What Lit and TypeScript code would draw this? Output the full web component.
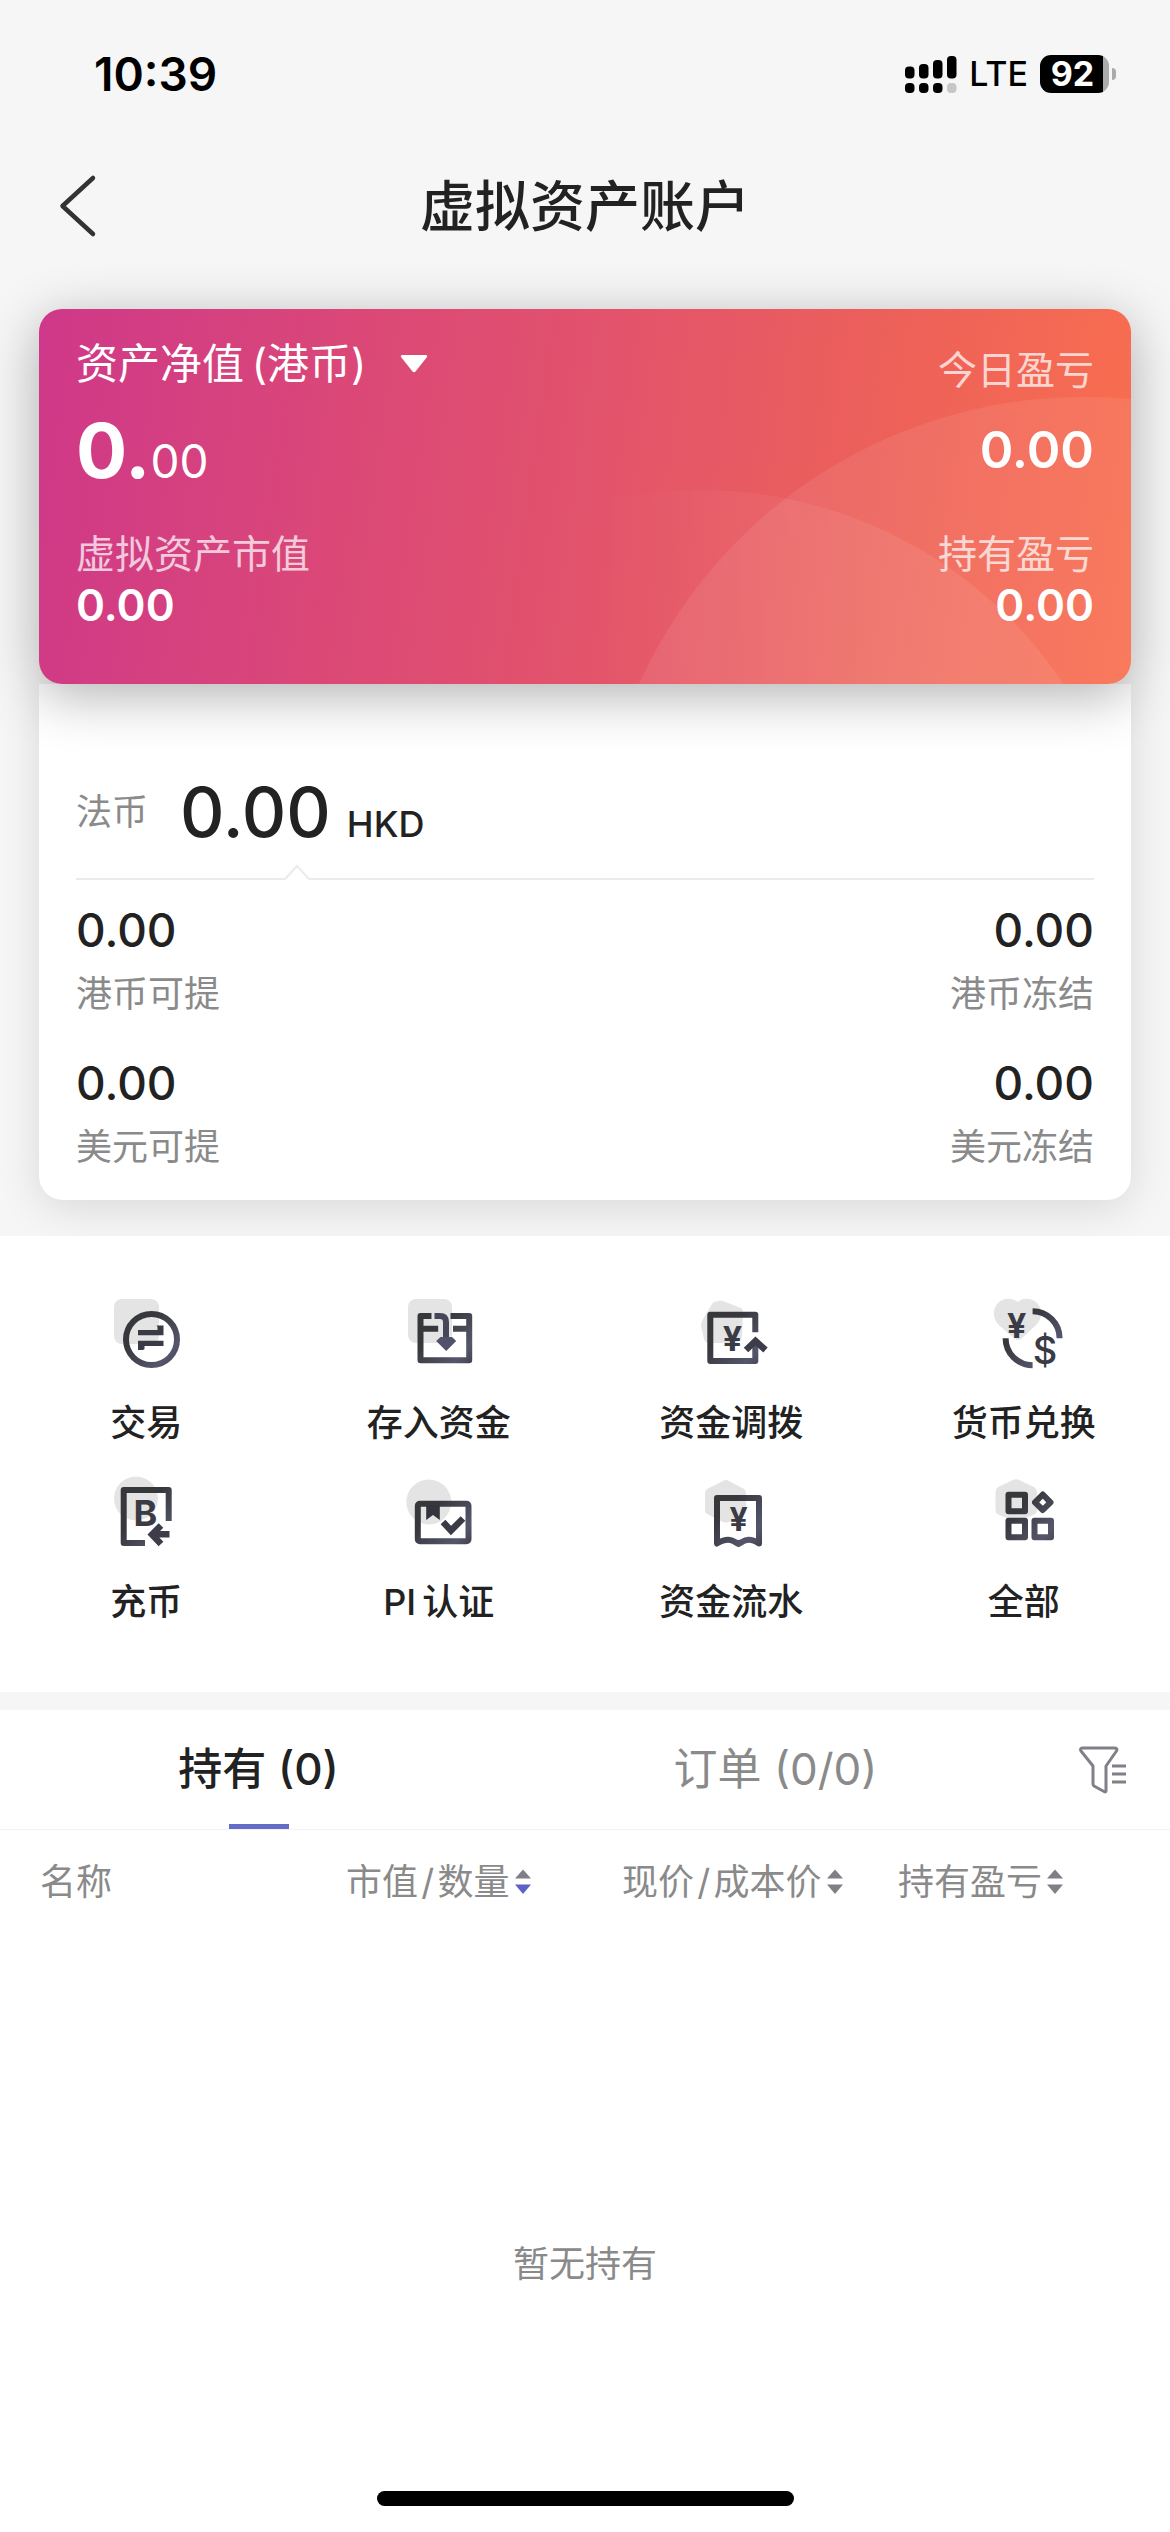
import { LitElement, html, svg, css } from "lit";
import { customElement, property, state } from "lit/decorators.js";
import { classMap } from "lit/directives/class-map.js";

const INK = "url(#ink)";

const icons = {
  trade: svg`
    <rect x="4" y="3" width="45" height="45" rx="8" fill="#e4e4e4" />
    <circle cx="41.5" cy="43.5" r="25.5" fill="none" stroke=${INK} stroke-width="6" />
    <path fill="#3a3b44" d="M28 39.2V34H47.5V31L46.5 29.5H53.5V39.2Z" />
    <path fill="#3a3b44" d="M53.5 44.8V50H34.5V53L33 54H28V44.8Z" />`,
  deposit: svg`
    <rect x="5" y="3" width="44" height="44" rx="8" fill="#e4e4e4" />
    <path fill="none" stroke=${INK} stroke-width="6" stroke-linejoin="round"
      d="M28.5 20H17.5V64.3H66.2V20H47.5M17.5 32.7H35.2M50 32.7H66.2" />
    <path fill="none" stroke="#45465a" stroke-width="6" d="M31.5 20H37Q43 20 43 26V44" />
    <path fill="#50526a" d="M33.2 45L37.5 41H49L53.2 45L43.2 55Z" />`,
  transfer: svg`
    <path fill="#e4e4e4" d="M23 5Q25 4 28 5L46 12Q48 13 48 16L47 40Q45 47 40 47H14Q10 47 9 43L6 30Q6 27 7 25L17 8Q18 6 23 5Z" />
    <path fill="none" stroke=${INK} stroke-width="6" stroke-linejoin="round"
      d="M60.3 36.3V18.7H15.3V65H60.3V48" />
    <path fill="none" stroke="#3c3d49" stroke-width="6.5" d="M51 54L60.5 45L70.5 54" />
    <text class="glyph" x="37.5" y="54.7" font-size="34">¥</text>`,
  exchange: svg`
    <path fill="#e4e4e4" d="M30 6C35 1 45 2 50 8C56 16 53 25 46 31L33 43Q30 45 27 43L13 31C4 24 4 13 10 7C16 1 25 2 30 6Z" />
    <path fill="none" stroke=${INK} stroke-width="6" d="M44.6 15.2A27 27 0 0 1 71.6 42.2M17.6 42.2A27 27 0 0 0 44.6 69.2" />
    <text class="glyph" x="28.7" y="42" font-size="34">¥</text>
    <text class="glyph thin" x="57" y="68" font-size="38">$</text>`,
  coin: svg`
    <circle cx="26" cy="23.5" r="22" fill="#e4e4e4" />
    <path fill="none" stroke=${INK} stroke-width="6" stroke-linejoin="round"
      d="M58.7 46V15H13.7V68H35" />
    <text class="glyph" x="35.5" y="50.5" font-size="36">B</text>
    <path fill="none" stroke="#3c3d49" stroke-width="6.5" d="M59.5 59.3H43M51 50.5L42 59.5L51 69" />`,
  certify: svg`
    <circle cx="25.8" cy="27" r="22.5" fill="#e4e4e4" />
    <rect x="14.8" y="28.7" width="50.7" height="37.5" rx="2" fill="none" stroke=${INK} stroke-width="6" />
    <path fill="#33343c" d="M23.2 30H36.8V45L30 40L23.2 45Z" />
    <path fill="none" stroke="#3a3b47" stroke-width="6.5" d="M40 47L48 55.5L60 43.5" />`,
  ledger: svg`
    <path fill="#e4e4e4" d="M28 6Q31 4 34 6L49 14Q51 15.500 51 18V36Q51 38.500 49 39.500L34 47Q31 48 28 47L13 39.500Q10 38 10 36V18Q10 15.500 12 14Z" />
    <path fill="none" stroke=${INK} stroke-width="6" stroke-linejoin="round"
      d="M22 68.500V23H64V68.500Q57 64 52 65Q49 65.500 43.500 69Q38 65.500 35 65Q30 64 22 68.500Z" />
    <text class="glyph" x="43.500" y="56" font-size="32">¥</text>`,
  all: svg`
    <path fill="#e4e4e4" d="M25 5Q28 3.500 31 5L46 12Q49 14 49 17V35Q49 38 46 39.500L31 46Q28 48 25 46L10 39.500Q7.500 38 7.500 35V17Q7.500 14 10 12Z" />
    <g fill="none" stroke=${INK} stroke-width="6" stroke-linejoin="round">
      <rect x="20.500" y="19.700" width="16.500" height="16.500" />
      <rect x="20.500" y="45.700" width="16.500" height="16.500" />
      <rect x="46.500" y="45.700" width="16.500" height="16.500" />
      <path d="M54.800 19.500L62.500 27.300L54.800 35L47 27.300Z" />
    </g>`,
};

type IconName = keyof typeof icons;

const ACTIONS: { icon: IconName; label: string }[] = [
  { icon: "trade", label: "交易" },
  { icon: "deposit", label: "存入资金" },
  { icon: "transfer", label: "资金调拨" },
  { icon: "exchange", label: "货币兑换" },
  { icon: "coin", label: "充币" },
  { icon: "certify", label: "PI\u2009认证" },
  { icon: "ledger", label: "资金流水" },
  { icon: "all", label: "全部" },
];

const BALANCES = [
  { amount: "0.00", label: "港币可提" },
  { amount: "0.00", label: "港币冻结" },
  { amount: "0.00", label: "美元可提" },
  { amount: "0.00", label: "美元冻结" },
];

const COLUMNS = [
  { key: "name", label: "名称", sortable: false },
  { key: "value", label: "市值\u200a/\u200a数量", sortable: true },
  { key: "price", label: "现价\u200a/\u200a成本价", sortable: true },
  { key: "profit", label: "持有盈亏", sortable: true },
];

const TABS = ["持有 (0)", "订单 (0/0)"];

const shared = css`
  * {
    box-sizing: border-box;
  }
  button {
    margin: 0;
    padding: 0;
    border: 0;
    background: none;
    color: inherit;
    font: inherit;
    cursor: pointer;
  }
  svg {
    display: block;
    flex: none;
    overflow: visible;
  }
`;

@customElement("status-bar")
export class StatusBar extends LitElement {
  static styles = [
    shared,
    css`
      :host {
        display: flex;
        align-items: center;
        justify-content: space-between;
        height: 148px;
        padding: 0 54px 0 94px;
        color: #000;
      }
      .time {
        font-size: 46px;
        font-weight: 600;
      }
      .signals {
        display: flex;
        align-items: center;
        gap: 12px;
      }
      .network {
        font-size: 34px;
        font-weight: 500;
      }
      .battery {
        display: flex;
        align-items: center;
        gap: 3px;
      }
      .level {
        width: 69px;
        height: 38px;
        border-radius: 11px;
        background: linear-gradient(90deg, #000 63px, #ababab 63px);
        color: #fff;
        font-size: 34px;
        font-weight: 700;
        line-height: 38px;
        text-align: center;
        padding-right: 4px;
      }
      .nub {
        width: 4px;
        height: 12px;
        border-radius: 0 6px 6px 0;
        background: #ababab;
      }
    `,
  ];

  render() {
    return html`
      <span class="time">10:39</span>
      <div class="signals">
        <svg width="52" height="38" viewBox="0 0 52 38" aria-hidden="true">
          <rect x="0" y="11.500" width="9.500" height="12" rx="4" />
          <rect x="14" y="9" width="9.500" height="14.500" rx="4" />
          <rect x="28" y="5" width="9.500" height="18.500" rx="4" />
          <rect x="42" y="1" width="9.500" height="22.500" rx="4" />
          <rect x="0" y="28" width="9.500" height="10" rx="4" />
          <rect x="14" y="28" width="9.500" height="10" rx="4" />
          <rect x="28" y="28" width="9.500" height="10" rx="4" />
          <rect x="42" y="28" width="9.500" height="10" rx="4" fill="#c6c6c6" />
        </svg>
        <span class="network">LTE</span>
        <div class="battery">
          <div class="level">92</div>
          <div class="nub"></div>
        </div>
      </div>
    `;
  }
}

@customElement("asset-card")
export class AssetCard extends LitElement {
  static styles = [
    shared,
    css`
      :host {
        display: block;
        position: relative;
        z-index: 1;
        border-radius: 23px;
        overflow: hidden;
        color: #fff;
        background: linear-gradient(98deg, #cf3889 0%, #da4778 27%, #e3546b 52%, #ed6159 76%, #f96f4f 100%);
      }
      .circles {
        position: absolute;
        right: 0;
        bottom: 0;
      }
      .content {
        position: relative;
        display: flex;
        justify-content: space-between;
        padding: 25px 37px 54px;
      }
      .side {
        display: flex;
        flex-direction: column;
        align-items: flex-start;
      }
      .side.end {
        align-items: flex-end;
      }
      .picker {
        display: flex;
        align-items: center;
        gap: 34px;
        height: 60px;
        margin-bottom: 16px;
        font-size: 42px;
      }
      .note {
        font-size: 39px;
        line-height: 52px;
        opacity: 0.72;
      }
      .note.tall {
        line-height: 72px;
        margin-bottom: 4px;
      }
      .figure {
        height: 80px;
        margin-bottom: 38px;
        line-height: 80px;
        font-weight: 600;
      }
      .whole {
        font-size: 76px;
        font-weight: 700;
      }
      .cents {
        font-size: 46px;
        font-weight: 400;
      }
      .today {
        font-size: 51px;
      }
      .value {
        font-size: 44px;
        line-height: 50px;
        font-weight: 600;
      }
    `,
  ];

  render() {
    return html`
      <svg class="circles" width="640" height="375" viewBox="491 309 640 375" aria-hidden="true">
        <defs>
          <linearGradient id="fade" gradientUnits="userSpaceOnUse" x1="600" y1="0" x2="880" y2="0">
            <stop offset="0" stop-color="#fff" stop-opacity="0" />
            <stop offset="1" stop-color="#fff" stop-opacity="0.08" />
          </linearGradient>
        </defs>
        <circle cx="700" cy="928" r="438" fill="url(#fade)" />
        <circle cx="1083" cy="884" r="487" fill="#fff" fill-opacity="0.08" />
      </svg>
      <div class="content">
        <div class="side">
          <button class="picker">
            ${"资产净值\u2009(港币)"}
            <svg width="28" height="18" viewBox="0 0 28 18" aria-hidden="true">
              <path fill="#fff" d="M2 0H26Q28 0.500 27 2L15.500 16.500Q14 18 12.500 16.500L1 2Q0 0.500 2 0Z" />
            </svg>
          </button>
          <div class="figure"><span class="whole">0.</span><span class="cents">00</span></div>
          <div class="note">虚拟资产市值</div>
          <div class="value">0.00</div>
        </div>
        <div class="side end">
          <div class="note tall">今日盈亏</div>
          <div class="figure today">0.00</div>
          <div class="note">持有盈亏</div>
          <div class="value">0.00</div>
        </div>
      </div>
    `;
  }
}

@customElement("cash-panel")
export class CashPanel extends LitElement {
  static styles = [
    shared,
    css`
      :host {
        display: block;
        padding: 88px 37px 29px;
        border-radius: 0 0 24px 24px;
        background: #fff;
        box-shadow: 0 8px 44px rgba(0, 0, 0, 0.12);
      }
      .total {
        display: flex;
        align-items: center;
        gap: 32px;
        height: 80px;
      }
      .label {
        color: #8a8a8a;
        font-size: 36px;
        line-height: 48px;
      }
      .sum {
        display: flex;
        align-items: baseline;
        gap: 16px;
        font-weight: 500;
      }
      .amount {
        font-size: 69px;
        line-height: 80px;
      }
      .unit {
        font-size: 36px;
        line-height: 48px;
      }
      .divider {
        display: flex;
        align-items: flex-end;
        height: 28px;
      }
      .rule {
        height: 2px;
        background: #ebebeb;
      }
      .rule.lead {
        width: 209px;
      }
      .rule.rest {
        flex: 1;
      }
      .balances {
        display: grid;
        grid-template-columns: 1fr 1fr;
        row-gap: 41px;
        padding-top: 26px;
      }
      .balance {
        display: flex;
        flex-direction: column;
        gap: 16px;
      }
      .balance:nth-child(even) {
        align-items: flex-end;
      }
      .money {
        font-size: 46px;
        line-height: 48px;
        font-weight: 500;
      }
    `,
  ];

  render() {
    return html`
      <div class="total">
        <span class="label">法币</span>
        <div class="sum"><span class="amount">0.00</span><span class="unit">HKD</span></div>
      </div>
      <div class="divider">
        <div class="rule lead"></div>
        <svg width="24" height="15" viewBox="0 0 24 15" aria-hidden="true">
          <path d="M0 14L12 1L24 14" fill="none" stroke="#ebebeb" stroke-width="2" />
        </svg>
        <div class="rule rest"></div>
      </div>
      <div class="balances">
        ${BALANCES.map(
          (b) => html`
            <div class="balance">
              <div class="money">${b.amount}</div>
              <div class="label">${b.label}</div>
            </div>
          `
        )}
      </div>
    `;
  }
}

@customElement("action-button")
export class ActionButton extends LitElement {
  @property() icon: IconName = "trade";
  @property() label = "";

  static styles = [
    shared,
    css`
      :host {
        display: block;
      }
      .action {
        display: flex;
        flex-direction: column;
        align-items: center;
        gap: 31px;
        width: 100%;
        font-size: 36px;
        font-weight: 500;
        line-height: 48px;
      }
      .glyph {
        fill: #3a3b44;
        font-weight: 700;
        text-anchor: middle;
      }
      .glyph.thin {
        font-weight: 500;
      }
    `,
  ];

  render() {
    return html`
      <button class="action">
        <svg width="72" height="72" viewBox="0 0 72 72" aria-hidden="true">
          <defs>
            <linearGradient id="ink" gradientUnits="userSpaceOnUse" x1="10" y1="15" x2="70" y2="70">
              <stop offset="0.350" stop-color="#37383c" />
              <stop offset="0.800" stop-color="#55566c" />
              <stop offset="1" stop-color="#404149" />
            </linearGradient>
          </defs>
          ${icons[this.icon]}
        </svg>
        <span>${this.label}</span>
      </button>
    `;
  }
}

@customElement("holdings-list")
export class HoldingsList extends LitElement {
  @state() private active = 0;

  static styles = [
    shared,
    css`
      :host {
        display: block;
        border-top: 18px solid #f6f6f6;
      }
      .bar {
        display: flex;
        border-bottom: 1px solid #f2f2f2;
      }
      .tabs {
        display: flex;
        flex: 1;
      }
      .tab {
        display: flex;
        flex: 1;
        flex-direction: column;
        align-items: center;
        padding-top: 5px;
        color: #8a8a8a;
        font-size: 44px;
        line-height: 109px;
      }
      .tab::after {
        content: "";
        width: 60px;
        height: 5px;
      }
      .tab.active {
        color: #222;
        font-weight: 500;
      }
      .tab.active::after {
        background: #636cc6;
      }
      .filter {
        display: flex;
        align-items: center;
        padding: 0 43px 0 45px;
      }
      .table {
        width: 100%;
        table-layout: fixed;
        border-collapse: collapse;
        color: #8a8a8a;
        font-size: 36px;
        line-height: 48px;
      }
      .head {
        height: 104px;
        padding: 0;
        font-weight: 400;
        text-align: left;
        white-space: nowrap;
      }
      .head.name {
        width: 346px;
        padding-left: 40px;
      }
      .head.profit {
        width: 272px;
      }
      .sort {
        display: flex;
        align-items: center;
        gap: 5px;
      }
      .empty {
        margin: 0;
        padding-top: 306px;
        color: #8a8a8a;
        font-size: 36px;
        line-height: 48px;
        text-align: center;
      }
    `,
  ];

  private arrows(descending: boolean) {
    return html`
      <svg width="16" height="26" viewBox="0 0 16 26" aria-hidden="true">
        <path d="M8 0.500L16 9.500H0Z" fill="#7f7f87" />
        <path d="M8 25L16 15.500H0Z" fill=${descending ? "#5b63c6" : "#7f7f87"} />
      </svg>
    `;
  }

  render() {
    return html`
      <div class="bar">
        <div class="tabs" role="tablist">
          ${TABS.map(
            (tab, i) => html`
              <button
                class=${classMap({ tab: true, active: i === this.active })}
                role="tab"
                aria-selected=${i === this.active}
                @click=${() => (this.active = i)}
              >
                ${tab}
              </button>
            `
          )}
        </div>
        <button class="filter" aria-label="筛选">
          <svg width="48" height="48" viewBox="0 0 48 48" fill="none" stroke="#808088" stroke-width="3" stroke-linejoin="round" aria-hidden="true">
            <path d="M4 2H35Q39 2 37.500 5L27 20V45Q27 46.500 25 45.500L15 40Q14 39 14 38V20L2 5Q0.500 2 4 2Z" />
            <path d="M33 20H47M33 28H47M33 36H47" />
          </svg>
        </button>
      </div>
      <table class="table">
        <thead>
          <tr>
            ${COLUMNS.map(
              (c, i) => html`
                <th class="head ${c.key}" scope="col">
                  ${c.sortable
                    ? html`<button class="sort">${c.label}${this.arrows(i === 1)}</button>`
                    : c.label}
                </th>
              `
            )}
          </tr>
        </thead>
      </table>
      <p class="empty">暂无持有</p>
    `;
  }
}

@customElement("app-root")
export class AppRoot extends LitElement {
  static styles = [
    shared,
    css`
      :host {
        display: flex;
        flex-direction: column;
        min-height: 100vh;
        background: #fff;
        color: #222;
        font-family: Inter, "Noto Sans CJK SC", sans-serif;
        line-height: 1;
      }
      .top {
        background: #f6f6f6;
        padding-bottom: 36px;
        overflow: hidden;
      }
      .nav {
        display: grid;
        grid-template-columns: 1fr auto 1fr;
        align-items: center;
        height: 116px;
        padding: 0 58px;
      }
      .title {
        margin: 0;
        font-size: 55px;
        font-weight: 500;
      }
      .cards {
        padding: 45px 39px 0;
      }
      .hero {
        border-radius: 23px;
        box-shadow: 0 12px 54px rgba(0, 0, 0, 0.3);
      }
      .actions {
        display: grid;
        grid-template-columns: repeat(4, 1fr);
        row-gap: 28px;
        padding: 60px 0 66px;
      }
      .foot {
        display: flex;
        justify-content: center;
        margin-top: auto;
        padding: 40px 0 26px;
      }
      .home {
        width: 417px;
        height: 15px;
        border-radius: 8px;
        background: #000;
      }
    `,
  ];

  render() {
    return html`
      <header class="top">
        <status-bar></status-bar>
        <nav class="nav">
          <button class="back" aria-label="返回">
            <svg width="38" height="62" viewBox="0 0 38 62" aria-hidden="true">
              <path d="M35 3L4.500 31L35 59" fill="none" stroke="#333" stroke-width="4.500" stroke-linecap="round" stroke-linejoin="round" />
            </svg>
          </button>
          <h1 class="title">虚拟资产账户</h1>
        </nav>
        <div class="cards">
          <asset-card class="hero"></asset-card>
          <cash-panel></cash-panel>
        </div>
      </header>
      <div class="actions">
        ${ACTIONS.map((a) => html`<action-button .icon=${a.icon} .label=${a.label}></action-button>`)}
      </div>
      <holdings-list></holdings-list>
      <footer class="foot"><div class="home"></div></footer>
    `;
  }
}
